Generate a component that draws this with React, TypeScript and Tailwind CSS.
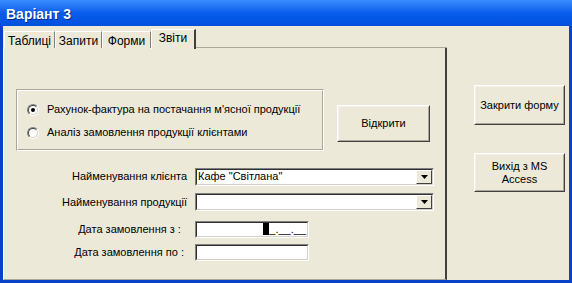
import React from "react";

const F = { fontFamily: '"Liberation Sans", Arial, sans-serif' };

function Raised({ className = "", children }: { className?: string; children?: React.ReactNode }) {
  return (
    <div className={"border border-t-white border-l-white border-r-[#404040] border-b-[#404040] " + className}>
      <div className="w-full h-full border border-t-[#F4F2E8] border-l-[#F4F2E8] border-r-[#ACA899] border-b-[#ACA899] flex items-center justify-center text-center text-[11px] leading-[13px] text-black">
        {children}
      </div>
    </div>
  );
}

function Sunken({ className = "", children }: { className?: string; children?: React.ReactNode }) {
  return (
    <div className={"border border-t-[#808080] border-l-[#808080] border-r-white border-b-white " + className}>
      <div className="w-full h-full border border-t-[#303030] border-l-[#303030] border-r-[#D4D0C8] border-b-[#D4D0C8] bg-white flex items-center">
        {children}
      </div>
    </div>
  );
}

function Combo({ value }: { value?: string }) {
  return (
    <Sunken className="w-[239px] h-[18px]">
      <span className="flex-1 pl-[1px] text-[11px] leading-[13px] text-black whitespace-nowrap">{value}</span>
      <div className="w-[16px] h-[14px] border border-t-white border-l-white border-r-[#404040] border-b-[#404040] bg-[#ECE9D8] flex items-center justify-center">
        <svg width="7" height="4" viewBox="0 0 7 4"><path d="M0 0h7L3.5 4z" fill="#000" /></svg>
      </div>
    </Sunken>
  );
}

function Radio({ checked }: { checked?: boolean }) {
  return (
    <div className="w-[12px] h-[12px] rounded-full border border-t-[#808080] border-l-[#808080] border-r-white border-b-white">
      <div className="w-full h-full rounded-full border border-t-[#404040] border-l-[#404040] border-r-[#D4D0C8] border-b-[#D4D0C8] bg-white flex items-center justify-center">
        {checked && <div className="w-[4px] h-[4px] rounded-full bg-black" />}
      </div>
    </div>
  );
}

function Tab({ label, selected, w }: { label: string; selected?: boolean; w: string }) {
  if (selected) {
    return (
      <div className={"h-[20px] -mb-[1px] pt-[1px] border-l border-t border-l-white border-t-white border-r-2 border-r-[#404040] bg-[#ECE9D8] text-[12px] leading-[14px] text-center relative z-10 " + w}>
        {label}
      </div>
    );
  }
  return (
    <div className={"h-[17px] pt-[2px] border-l border-t border-l-white border-t-white border-r border-r-[#808080] bg-[#ECE9D8] text-[12px] leading-[14px] text-center " + w}>
      {label}
    </div>
  );
}

function Label({ children }: { children: React.ReactNode }) {
  return <div className="w-[183px] text-right text-[11px] leading-[13px] text-black">{children}</div>;
}

export default function App() {
  return (
    <div className="w-[572px] h-[283px] bg-[#0842C8] flex flex-col overflow-hidden" style={F}>
      <div className="h-[26px] bg-gradient-to-b from-[#3A8CFF] via-[#0A5CEC] to-[#0050DC] flex items-center pl-[6px] pt-[1px]">
        <span className="text-white font-bold text-[14px] leading-[16px]" style={{ textShadow: "1px 1px 0 #0A2A80" }}>Варіант 3</span>
      </div>
      <div className="flex-1 ml-[3px] mr-[3px] mb-[3px] bg-[#ECE9D8] flex">
        {/* tab control */}
        <div className="w-[444px] flex flex-col pt-[2px]">
          <div className="flex items-end pl-[1px] h-[20px]">
            <Tab label="Таблиці" w="w-[51px]" />
            <Tab label="Запити" w="w-[47px]" />
            <Tab label="Форми" w="w-[49px]" />
            <Tab label="Звіти" selected w="w-[45px]" />
            <div className="flex-1 border-b border-b-[#ACA899]" />
          </div>
          <div className="flex-1 border-l border-l-white border-r-2 border-r-[#404040] border-b border-b-[#ACA899] flex flex-col">
            <div className="flex items-start mt-[41px]">
              <div className="ml-[12px] w-[308px] h-[62px] border border-t-[#ACA899] border-l-[#ACA899] border-r-white border-b-white">
                <div className="w-full h-full border border-t-white border-l-white border-r-[#ACA899] border-b-[#ACA899] flex flex-col pl-[9px] pt-[12px] gap-[10px]">
                  <div className="flex items-center gap-[8px]">
                    <Radio checked />
                    <span className="text-[11px] leading-[13px] text-black">Рахунок-фактура на постачання м'ясної продукції</span>
                  </div>
                  <div className="flex items-center gap-[8px]">
                    <Radio />
                    <span className="text-[11px] leading-[13px] text-black">Аналіз замовлення продукції клієнтами</span>
                  </div>
                </div>
              </div>
              <Raised className="ml-[13px] mt-[16px] w-[93px] h-[37px]">Відкрити</Raised>
            </div>
            <div className="flex flex-col mt-[17px]">
              <div className="flex items-center gap-[8px] h-[17px]">
                <Label>Найменування клієнта</Label>
                <Combo value={'Кафе "Світлана"'} />
              </div>
              <div className="flex items-center gap-[8px] h-[18px] mt-[8px]">
                <Label>Найменування продукції</Label>
                <Combo />
              </div>
              <div className="flex items-center gap-[8px] h-[17px] mt-[10px]">
                <Label>Дата замовлення з :&nbsp;&nbsp;</Label>
                <Sunken className="w-[114px] h-[17px]">
                  <div className="flex-1 flex justify-end items-end pr-[1px] h-full">
                    <div className="w-[6px] h-[12px] bg-black mb-[1px]" />
                    <span className="text-[11px] leading-[13px] text-black">_.__.__</span>
                  </div>
                </Sunken>
              </div>
              <div className="flex items-center gap-[8px] h-[17px] mt-[6px]">
                <Label>Дата замовлення по :&nbsp;</Label>
                <Sunken className="w-[114px] h-[17px]" />
              </div>
            </div>
          </div>
        </div>
        {/* right column */}
        <div className="flex-1 flex flex-col pl-[27px] pt-[59px]">
          <Raised className="w-[91px] h-[40px]">Закрити форму</Raised>
          <Raised className="w-[91px] h-[39px] mt-[28px]">
            <span>Вихід з MS<br />Access</span>
          </Raised>
        </div>
      </div>
    </div>
  );
}
